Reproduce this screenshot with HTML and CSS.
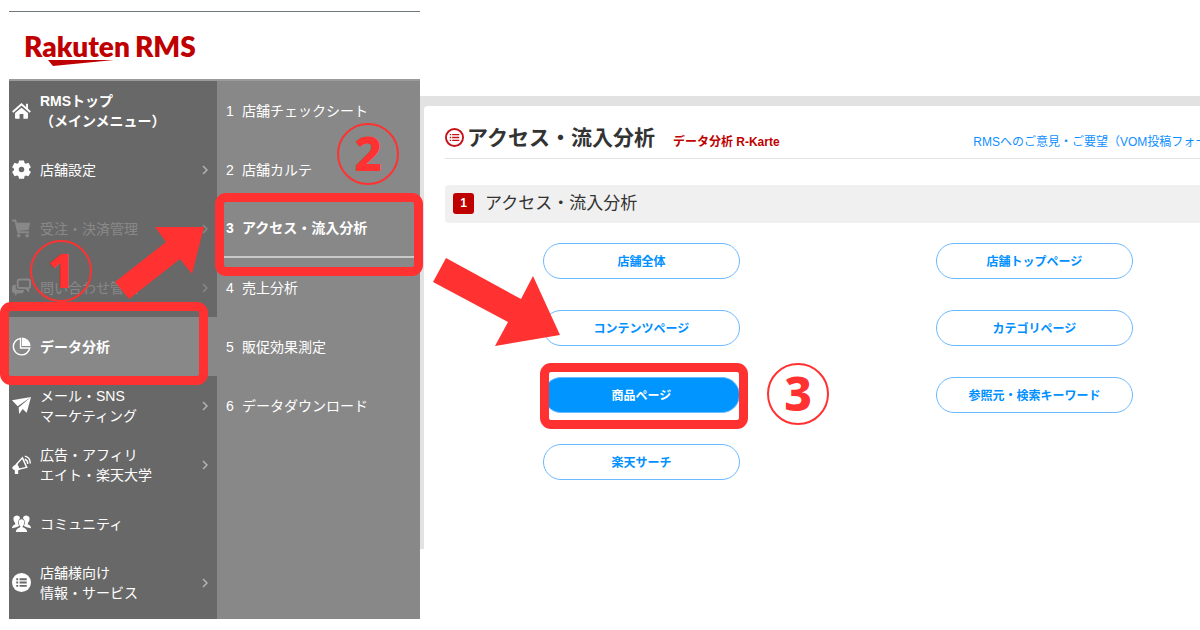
FILE: index.html
```html
<!DOCTYPE html>
<html lang="ja">
<head>
  <meta charset="UTF-8">
  <meta name="viewport" content="width=device-width, initial-scale=1.0">
  <title>アクセス・流入分析 | Rakuten RMS</title>
  <link rel="stylesheet" href="styles.css">
</head>
<body>

  <div class="page">

    <aside class="side">
      <header class="brand">
        <div class="logo">
          <span>Rakuten</span> <span>RMS</span>
          <svg class="logo-mark" width="66" height="6" viewBox="0 0 66 6"><path d="M0 0H66L5 6z"/></svg>
        </div>
      </header>

      <div class="menus">
        <nav class="main-menu">
          <a href="#" class="item strong">
            <svg class="icon" viewBox="0 0 20 20"><path d="M10 7 3.200 12.500V18q0 .8.8.8h4v-5h4v5h4q.8 0 .8-.8v-5.500z"/><path class="line" d="M.8 11.500 10 3.500 19.200 11.500M15.800 3v5"/></svg>
            <span>RMSトップ<br>（メインメニュー）</span>
          </a>
          <a href="#" class="item">
            <svg class="icon" viewBox="0 0 20 20"><path fill-rule="evenodd" d="M7.400.4h5.200l.6 2.700 1.400.8 2.700-.9 2.600 4.500-2 1.800v1.600l2 1.800-2.600 4.500-2.700-.9-1.400.8-.6 2.700H7.400l-.6-2.700-1.400-.8-2.700.9L.1 12.700l2-1.800V9.300l-2-1.800L2.700 3l2.700.9 1.400-.8zM10 7.200a2.900 2.900 0 1 0 0 5.800 2.900 2.900 0 0 0 0-5.800z"/></svg>
            <span>店舗設定</span>
            <svg class="chevron" viewBox="0 0 6 10"><path d="M1 1l4 4-4 4"/></svg>
          </a>
          <a href="#" class="item dim">
            <svg class="icon" viewBox="0 0 20 20"><path class="line" d="M0 1.500h3.500L6.500 14H18"/><path d="M4 4h15l-1.500 7.500L6 12.500z"/><circle cx="7" cy="17.500" r="1.900"/><circle cx="16" cy="17.500" r="1.900"/></svg>
            <span>受注・決済管理</span>
            <svg class="chevron" viewBox="0 0 6 10"><path d="M1 1l4 4-4 4"/></svg>
          </a>
          <a href="#" class="item dim">
            <svg class="icon" viewBox="0 0 20 20"><path class="line" d="M8 1.500h9q2 0 2 2v5q0 2-2 2v2.500L14.500 10.500H8q-2 0-2-2v-5q0-2 2-2z"/><path d="M4 7v2.500Q4 12.500 7 12.500h5.500v1q0 2.500-2 2.500H6L3 19v-3q-3 0-3-2.500V9.500Q0 7 4 7z"/></svg>
            <span>問い合わせ管理</span>
            <svg class="chevron" viewBox="0 0 6 10"><path d="M1 1l4 4-4 4"/></svg>
          </a>
          <a href="#" class="item strong active">
            <svg class="icon" viewBox="0 0 20 20"><path class="thin" d="M9 1.500A8.700 8.700 0 1 0 18.700 11.500H9z"/><path d="M10.500.5a9 9 0 0 1 9 9h-9z"/></svg>
            <span>データ分析</span>
          </a>
          <a href="#" class="item">
            <svg class="icon" viewBox="0 0 20 20"><path d="M0 4.500 20 1 6 10.800zM20 1 15.500 17.500l-4.300-3.800L7.500 19 7 12z"/></svg>
            <span>メール・SNS<br>マーケティング</span>
            <svg class="chevron" viewBox="0 0 6 10"><path d="M1 1l4 4-4 4"/></svg>
          </a>
          <a href="#" class="item">
            <svg class="icon" viewBox="0 0 20 20"><path d="M5 9 1 12q-1.500 1.500 0 3l2 1v4h3.500v-4l2-.5z"/><path class="thin" d="M5 9.500 11 3 15.500 13 7 15zM13.500 4.500q3.300 1 3 5M13.500 1.200q5.800 1 5.700 7.800"/></svg>
            <span>広告・アフィリ<br>エイト・楽天大学</span>
            <svg class="chevron" viewBox="0 0 6 10"><path d="M1 1l4 4-4 4"/></svg>
          </a>
          <a href="#" class="item">
            <svg class="icon" viewBox="0 0 20 20"><path d="M5 1.500q3 0 3.500 3-2 1.500-2 4.500 0 2 1 3.500L4.500 14 0 15q0-3 3.300-4V9.500Q1.500 8 1.500 5t3.500-3.500zM15 1.500q-3 0-3.500 3 2 1.500 2 4.500 0 2-1 3.500l3 1.500 4.500 1q0-3-3.300-4V9.500Q18.500 8 18.500 5T15 1.500z"/><path d="M10 5.500q2.800 0 2.800 3.500 0 2.500-1.500 3.800v1.200q4.200 1 4.700 5H4q.5-4 4.700-5v-1.200Q7.200 11.500 7.200 9q0-3.500 2.800-3.500z"/></svg>
            <span>コミュニティ</span>
          </a>
          <a href="#" class="item">
            <svg class="icon" viewBox="0 0 20 20"><circle cx="10" cy="10" r="10"/><path class="rows" d="M4.500 6.500h2M8 6.500h7.500M4.500 10h2M8 10h7.500M4.500 13.500h2M8 13.500h7.500"/></svg>
            <span>店舗様向け<br>情報・サービス</span>
            <svg class="chevron" viewBox="0 0 6 10"><path d="M1 1l4 4-4 4"/></svg>
          </a>
        </nav>

        <nav class="sub-menu">
          <a href="#" class="sub"><span class="num">1</span>店舗チェックシート</a>
          <a href="#" class="sub"><span class="num">2</span>店舗カルテ</a>
          <a href="#" class="sub current"><span class="num">3</span>アクセス・流入分析</a>
          <a href="#" class="sub"><span class="num">4</span>売上分析</a>
          <a href="#" class="sub"><span class="num">5</span>販促効果測定</a>
          <a href="#" class="sub"><span class="num">6</span>データダウンロード</a>
        </nav>
      </div>
    </aside>

    <main class="panel">
      <div class="panel-body">
        <div class="content">
          <div class="title-row">
            <svg class="title-icon" viewBox="0 0 20 20"><circle cx="10" cy="10" r="9"/><path class="rows" d="M5 7h1.500M7.500 7H15M5 10h1.500M7.500 10H15M5 13h1.500M7.500 13H15"/></svg>
            <h1>アクセス・流入分析</h1>
            <span class="category">データ分析 R-Karte</span>
            <a href="#" class="feedback">RMSへのご意見・ご要望（VOM投稿フォーム）</a>
          </div>

          <h2 class="section"><span class="badge">1</span>アクセス・流入分析</h2>

          <div class="buttons">
            <button type="button">店舗全体</button>
            <button type="button">店舗トップページ</button>
            <button type="button">コンテンツページ</button>
            <button type="button">カテゴリページ</button>
            <button type="button" class="selected">商品ページ</button>
            <button type="button">参照元・検索キーワード</button>
            <button type="button">楽天サーチ</button>
          </div>
        </div>
      </div>
    </main>

    <!-- step markers over the screen -->
    <div class="frame frame-1"></div>
    <div class="frame frame-2"></div>
    <div class="frame frame-3"></div>
    <svg class="arrow arrow-1" width="90" height="74" viewBox="0 0 90 74"><path d="M0 57 51 17 40 2H89L77 49 65 34 14 74z"/></svg>
    <svg class="arrow arrow-2" width="128" height="88" viewBox="0 0 128 88"><path d="M14 0 89 41 101 18 128 77 63 88 76 64 1 24z"/></svg>
    <div class="step step-1">1</div>
    <div class="step step-2">2</div>
    <div class="step step-3">3</div>
  </div>

</body>
</html>
```

FILE: styles.css
```css
* {
  box-sizing: border-box;
}
body {
  margin: 0;
  background-color: #fff;
  color: #333;
  font-family: "Liberation Sans", "Noto Sans CJK JP", sans-serif;
  font-size: 14px;
}
a {
  text-decoration: none;
}
.page {
  position: relative;
  display: flex;
  align-items: flex-start;
  padding: 11px 0 11px 9px;
  overflow: hidden;
}

/* left side */
.side {
  flex: none;
  width: 411px;
}
.brand {
  border-top: 1px solid #6f787a;
  padding: 14px 15px 13px;
}
.logo {
  position: relative;
  display: flex;
  gap: 5px;
  color: #bf0000;
  font-family: Lato, sans-serif;
  font-size: 28px;
  font-weight: 800;
  line-height: 40px;
}
.logo-mark {
  position: absolute;
  left: 24px;
  top: 34px;
  fill: #bf0000;
}
.menus {
  display: flex;
  border-top: 2px solid #9b9b9b;
  background-color: #888;
}
.main-menu {
  width: 208px;
  padding-bottom: 7px;
  background-color: #686868;
}
.item {
  display: flex;
  align-items: center;
  gap: 9px;
  height: 59px;
  padding: 0 9px 0 3px;
  color: #fff;
  line-height: 20px;
}
.item.strong {
  font-weight: bold;
}
.item.dim {
  color: #888;
}
.item.active {
  background-color: #888;
}
.icon {
  flex: none;
  width: 19px;
  height: 19px;
  fill: currentColor;
}
.icon .line {
  fill: none;
  stroke: currentColor;
  stroke-width: 2;
}
.icon .thin {
  fill: none;
  stroke: currentColor;
  stroke-width: 1.5;
}
.icon .rows {
  stroke: #686868;
  stroke-width: 2;
}
.chevron {
  width: 6px;
  height: 10px;
  margin-left: auto;
  fill: none;
  stroke: #b4b4b4;
  stroke-width: 1.5;
}
.dim .chevron {
  stroke: #888;
}
.sub-menu {
  flex: 1;
  padding: 0 6px;
}
.sub {
  display: flex;
  align-items: center;
  height: 59px;
  padding-left: 3px;
  color: #fff;
  line-height: 20px;
}
.sub.current {
  border-bottom: 2px solid #c8c8c8;
  font-weight: bold;
}
.num {
  width: 16px;
}

/* right side */
.panel {
  flex: 1;
  min-width: 0;
  margin-top: 85px;
  padding: 10px 0 0 4px;
  background-color: #e2e2e2;
}
.panel-body {
  padding: 12px 0 69px 21px;
  border-top-left-radius: 4px;
  background-color: #fff;
  overflow: hidden;
}
.content {
  min-width: 786px;
}
.title-row {
  display: flex;
  align-items: center;
  height: 41px;
  padding-bottom: 1px;
  border-bottom: 1px solid #e2e2e2;
}
.title-icon {
  width: 19px;
  height: 19px;
  margin-right: 3px;
  fill: none;
  stroke: #c4141a;
  stroke-width: 2;
}
.title-icon .rows {
  stroke-width: 1.5;
}
h1 {
  margin: 0;
  font-size: 21px;
  line-height: 30px;
}
.category,
.feedback {
  padding-top: 8px;
  font-size: 12px;
  line-height: 18px;
}
.category {
  margin-left: 18px;
  color: #bf0000;
  font-weight: bold;
}
.feedback {
  margin-left: auto;
  color: #0f8fff;
}
.section {
  display: flex;
  align-items: center;
  gap: 11px;
  height: 38px;
  margin: 26px 0 20px;
  padding: 0 8px 2px;
  border-radius: 4px;
  background-color: #f0f0f0;
  font-size: 17px;
  font-weight: normal;
  line-height: 21px;
}
.badge {
  width: 21px;
  border-radius: 3px;
  background-color: #bf0000;
  color: #fff;
  font-size: 12px;
  font-weight: bold;
  text-align: center;
}
.buttons {
  display: grid;
  grid-template-columns: 1fr 1fr;
  gap: 31px 0;
  justify-items: center;
}
.buttons button {
  width: 197px;
  height: 36px;
  padding: 0 0 2px;
  border: 1px solid #6bb9ff;
  border-radius: 18px;
  background-color: #fff;
  color: #0090ff;
  font-family: inherit;
  font-size: 12px;
  font-weight: bold;
  cursor: pointer;
}
.buttons .selected {
  background-color: #0095ff;
  color: #fff;
}

/* step markers */
.frame,
.arrow,
.step {
  position: absolute;
}
.frame {
  width: 208px;
  height: 83px;
  border: 9px solid #ff3131;
  border-radius: 11px;
}
.frame-1 {
  left: 0;
  top: 302px;
}
.frame-2 {
  left: 215px;
  top: 193px;
}
.frame-3 {
  left: 540px;
  top: 363px;
  height: 66px;
}
.arrow {
  fill: #ff3131;
}
.arrow-1 {
  left: 115px;
  top: 225px;
}
.arrow-2 {
  left: 432px;
  top: 258px;
}
.step {
  width: 62px;
  height: 62px;
  border: 2px solid #ff3131;
  border-radius: 50%;
  color: #ff3131;
  font-family: "Noto Sans", sans-serif;
  font-size: 48px;
  font-weight: 800;
  line-height: 56px;
  text-align: center;
}
.step-1 {
  left: 30px;
  top: 240px;
}
.step-2 {
  left: 337px;
  top: 123px;
}
.step-3 {
  left: 767px;
  top: 363px;
}
```
